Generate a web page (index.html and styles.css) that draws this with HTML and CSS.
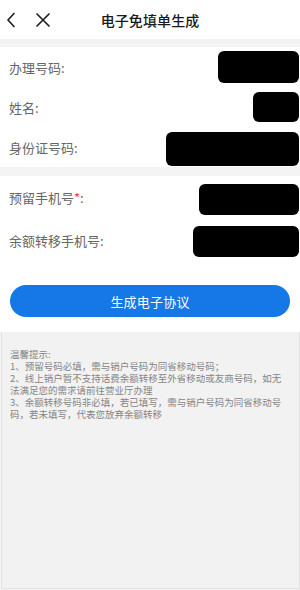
FILE: index.html
```html
<!DOCTYPE html>
<html lang="zh-CN">
    <head>
        <meta charset="utf-8">
        <meta name="viewport" content="width=device-width, initial-scale=1">
        <link rel="stylesheet" href="styles.css">
    </head>
    <body>
        <!--top bar: back, close and the page title-->
        <div class="topbar">
            <div class="nav-icons">
                <svg class="icon-back" width="10" height="16" viewBox="0 0 10 16">
                    <path d="M8 1.5 L2 8 L8 14.5" fill="none" stroke="#222" stroke-width="1.7" stroke-linecap="round" stroke-linejoin="round"/>
                </svg>
                <svg class="icon-close" width="16" height="16" viewBox="0 0 16 16">
                    <path d="M2 2 L14 14 M14 2 L2 14" fill="none" stroke="#222" stroke-width="1.7" stroke-linecap="round"/>
                </svg>
            </div>
            <div class="title">电子免填单生成</div>
            <div></div>
        </div>

        <!--read only info, values are blacked out-->
        <div class="card">
            <div class="row">
                <span class="label">办理号码:</span>
                <span class="masked mask-1"></span>
            </div>
            <div class="row">
                <span class="label">姓名:</span>
                <span class="masked mask-2"></span>
            </div>
            <div class="row">
                <span class="label">身份证号码:</span>
                <span class="masked mask-3"></span>
            </div>
        </div>

        <div class="card card-form">
            <div class="row row-tall">
                <span class="label">预留手机号<em class="required">*</em>:</span>
                <span class="masked mask-4"></span>
            </div>
            <div class="row row-tall">
                <span class="label">余额转移手机号:</span>
                <span class="masked mask-5"></span>
            </div>
            <button class="submit">生成电子协议</button>
        </div>

        <div class="tips">
            <p>温馨提示:</p>
            <p>1、预留号码必填，需与销户号码为同省移动号码；</p>
            <p>2、线上销户暂不支持话费余额转移至外省移动或友商号码，如无法满足您的需求请前往营业厅办理</p>
            <p>3、余额转移号码非必填，若已填写，需与销户号码为同省移动号码，若未填写，代表您放弃余额转移</p>
        </div>
    </body>
</html>
```

FILE: styles.css
```css
html {box-sizing: border-box;}
*, *:before, *:after {
    box-sizing: inherit;
}

body {
    margin: 0;
    min-height: 590px;
    display: flex;
    flex-direction: column;
    background-color: #f4f4f4;
    font-family: "Noto Sans CJK SC", "Noto Sans", sans-serif;
}

/*header*/
.topbar {
    height: 39px;
    display: grid;
    grid-template-columns: 1fr auto 1fr;
    align-items: center;
    background-color: #fff;
    margin-bottom: 8px;
}

.nav-icons {
    display: flex;
    align-items: center;
    padding-left: 6px;
    gap: 19px;
}

.nav-icons svg {
    display: block;
}

.title {
    font-size: 14px;
    font-weight: 500;
    color: #1a1a1a;
    letter-spacing: 0.1px;
}

/*white blocks with the rows*/
.card {
    background-color: #fff;
    margin-bottom: 9px;
}

.card-form {
    margin-bottom: 0;
    padding-bottom: 15px;
}

.row {
    height: 40px;
    display: flex;
    align-items: center;
    justify-content: space-between;
    padding-left: 9px;
    padding-right: 1px;
}

.row-tall {
    height: 43px;
}

.label {
    font-size: 13px;
    color: #666;
}

.required {
    font-style: normal;
    color: #e8453c;
}

/*redacted values*/
.masked {
    display: block;
    background-color: #000;
    border-radius: 6px;
}

.mask-1 { width: 81px; height: 32px; }
.mask-2 { width: 46px; height: 30px; }
.mask-3 { width: 133px; height: 34px; margin-top: 3px; }
.mask-4 { width: 100px; height: 31px; margin-top: 3px; }
.mask-5 { width: 106px; height: 31px; margin-top: 1px; }

.submit {
    display: block;
    width: 280px;
    height: 32px;
    margin: 23px 0 0 10px;
    border: none;
    border-radius: 16px;
    background-color: #1677e6;
    color: #fff;
    font-family: inherit;
    font-size: 13px;
    letter-spacing: 0.2px;
}

/*gray notes at the bottom*/
.tips {
    flex: 1;
    margin: 0 0 1px 1px;
    border: 1px solid #e2e2e2;
    border-top: none;
    background-color: #f2f2f2;
    padding: 16px 14px 0 8px;
    font-size: 9.5px;
    line-height: 12px;
    color: #858585;
}

.tips p {
    margin: 0;
}
```
